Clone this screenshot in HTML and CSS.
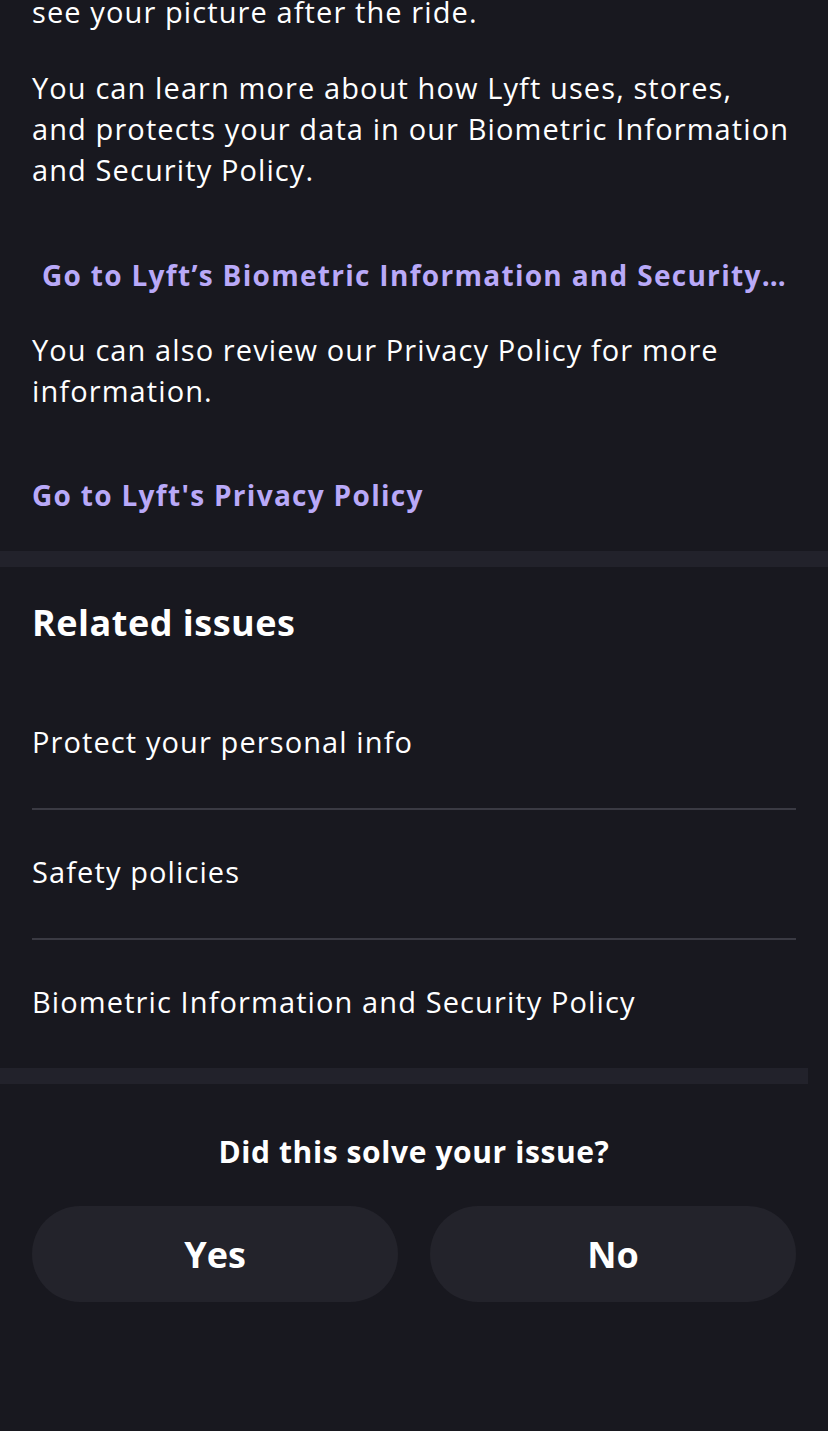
FILE: index.html
```html
<!DOCTYPE html>
<html lang="en">
<head>
<meta charset="utf-8">
<title>Lyft Help</title>
<link rel="stylesheet" href="styles.css">
</head>
<body>
<main class="page">
  <section class="article">
    <p class="para first">see your picture after the ride.</p>
    <p class="para">You can learn more about how Lyft uses, stores, and protects your data in our Biometric Information and Security Policy.</p>
    <a class="link link-button" href="#">Go to Lyft’s Biometric Information and Security Policy</a>
    <p class="para">You can also review our Privacy Policy for more information.</p>
    <a class="link link-plain" href="#">Go to Lyft's Privacy Policy</a>
  </section>
  <div class="band"></div>
  <section class="related">
    <h2 class="related-title">Related issues</h2>
    <ul class="related-list">
      <li class="related-item">Protect your personal info</li>
      <li class="related-item">Safety policies</li>
      <li class="related-item">Biometric Information and Security Policy</li>
    </ul>
  </section>
  <div class="band band-short"></div>
  <section class="feedback">
    <h3 class="feedback-title">Did this solve your issue?</h3>
    <div class="feedback-buttons">
      <button class="fb-btn">Yes</button>
      <button class="fb-btn">No</button>
    </div>
  </section>
</main>
</body>
</html>
```
FILE: styles.css
```css
html, body {
  margin: 0;
  padding: 0;
  background: #18181f;
}
body {
  font-family: "Open Sans", "Noto Sans", sans-serif;
  color: #ffffff;
  overflow: hidden;
}
.page {
  display: flex;
  flex-direction: column;
}
.article {
  padding: 0 32px;
  display: flex;
  flex-direction: column;
  margin-top: -9px;
}
.para {
  margin: 35px 0 0;
  padding-right: 5px;
  font-size: 29px;
  line-height: 41px;
  letter-spacing: 1.1px;
  font-weight: 400;
}
.para.first {
  margin-top: 0;
}
.link {
  display: block;
  color: #b9a9f8;
  font-weight: 700;
  font-size: 28px;
  letter-spacing: 1.3px;
  line-height: 56px;
  text-decoration: none;
  white-space: nowrap;
  overflow: hidden;
  text-overflow: ellipsis;
}
.link-button {
  margin: 57px 0 26px;
  padding: 0 10px;
}
.link-button + .para {
  margin-top: 0;
}
.link-plain {
  margin: 56px 0 28px;
}
.band {
  height: 16px;
  background: #22222b;
}
.band-short {
  width: calc(100% - 20px);
}
.related {
  padding: 36px 32px 0;
}
.related-title {
  margin: 0;
  font-size: 36px;
  line-height: 40px;
  letter-spacing: 0.5px;
  font-weight: 700;
}
.related-list {
  list-style: none;
  margin: 37px 0 0;
  padding: 0;
}
.related-item {
  height: 128px;
  box-sizing: border-box;
  padding-bottom: 6px;
  display: flex;
  align-items: center;
  font-size: 29px;
  letter-spacing: 1.1px;
  border-bottom: 2px solid #3a3a43;
}
.related-item:last-child {
  border-bottom: none;
  height: 128px;
}
.related-item:not(:last-child) {
  height: 130px;
}
.feedback {
  padding: 48px 32px 0;
  display: flex;
  flex-direction: column;
  align-items: center;
}
.feedback-title {
  margin: 0;
  font-size: 30px;
  line-height: 40px;
  letter-spacing: 0.6px;
  font-weight: 700;
}
.feedback-buttons {
  margin-top: 34px;
  display: grid;
  grid-template-columns: 1fr 1fr;
  gap: 32px;
  width: 100%;
}
.fb-btn {
  height: 96px;
  border: none;
  border-radius: 48px;
  background: #23232b;
  color: #ffffff;
  font-family: inherit;
  font-size: 36px;
  font-weight: 700;
}
```
